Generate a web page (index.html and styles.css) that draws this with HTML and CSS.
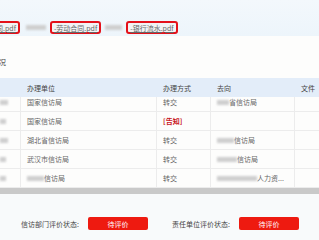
FILE: index.html
```html
<!DOCTYPE html>
<html lang="zh">
<head>
<meta charset="utf-8">
<link rel="stylesheet" href="styles.css">
</head>
<body>
<div class="top">
  <a class="file first">劳动合同.pdf</a>
  <span class="blur w20"></span>
  <a class="file">-劳动合同.pdf</a>
  <span class="blur w17"></span>
  <a class="file">-银行流水.pdf</a>
</div>
<div class="title">处理情况</div>
<div class="table">
  <div class="thead row">
    <div class="c1"></div>
    <div class="c2">办理单位</div>
    <div class="c3">办理方式</div>
    <div class="c4">去向</div>
    <div class="c5">文件</div>
  </div>
  <div class="tbody">
    <div class="row firstrow">
      <div class="c1"><span class="blur w8"></span></div>
      <div class="c2">国家信访局</div>
      <div class="c3">转交</div>
      <div class="c4"><span class="blur w12"></span>省信访局</div>
      <div class="c5"></div>
    </div>
    <div class="row">
      <div class="c1"><span class="blur w6"></span></div>
      <div class="c2">国家信访局</div>
      <div class="c3 notice">[告知]</div>
      <div class="c4"></div>
      <div class="c5"></div>
    </div>
    <div class="row">
      <div class="c1"><span class="blur w8"></span></div>
      <div class="c2">湖北省信访局</div>
      <div class="c3">转交</div>
      <div class="c4"><span class="blur w17"></span>信访局</div>
      <div class="c5"></div>
    </div>
    <div class="row">
      <div class="c1"><span class="blur w6"></span></div>
      <div class="c2">武汉市信访局</div>
      <div class="c3">转交</div>
      <div class="c4"><span class="blur w20"></span>信访局</div>
      <div class="c5"></div>
    </div>
    <div class="row">
      <div class="c1"><span class="blur w6"></span></div>
      <div class="c2"><span class="blur w17"></span>信访局</div>
      <div class="c3">转交</div>
      <div class="c4"><span class="blur w40"></span>人力资...</div>
      <div class="c5"></div>
    </div>
  </div>
</div>
<div class="scrollbar"></div>
<div class="footer">
  <div class="group">
    <span class="label">信访部门评价状态:</span>
    <span class="btn">待评价</span>
  </div>
  <div class="group second">
    <span class="label">责任单位评价状态:</span>
    <span class="btn">待评价</span>
  </div>
</div>
</body>
</html>
```

FILE: styles.css
```css
html, body {
  margin: 0;
  padding: 0;
}
body {
  width: 319px;
  height: 240px;
  overflow: hidden;
  background: #fdfdfc;
  font-family: "Noto Sans CJK SC", "Noto Sans", sans-serif;
  font-size: 7px;
  color: #555;
}
.top {
  height: 36px;
  box-sizing: border-box;
  padding-top: 21px;
  background: linear-gradient(#f3f8fc, #edf5fb);
  display: flex;
  align-items: flex-start;
  gap: 4px;
  margin-left: -29px;
}
.file {
  display: inline-flex;
  align-items: center;
  height: 13px;
  box-sizing: border-box;
  border: 2px solid #e4111a;
  border-radius: 3px;
  padding: 0 2px;
  background: #f2f3f4;
  color: #666;
  text-decoration: underline;
  font-size: 7px;
  white-space: nowrap;
}
.first {
  margin-right: 2px;
}
.top .blur {
  margin-top: 4px;
}
.blur {
  display: inline-block;
  height: 5px;
  background: #cfcfcf;
  filter: blur(1px);
  vertical-align: middle;
}
.w6 { width: 6px; }
.w8 { width: 8px; }
.w12 { width: 12px; }
.w17 { width: 17px; }
.w20 { width: 20px; }
.w40 { width: 40px; }
.title {
  margin-top: 22px;
  margin-left: -22px;
  font-size: 7px;
  line-height: 9px;
  color: #444;
  height: 20px;
}
.row {
  display: grid;
  grid-template-columns: 21px 136px 54px 84px 24px;
  height: 19px;
  border-bottom: 1px solid #ececec;
  box-sizing: border-box;
}
.row > div {
  display: flex;
  align-items: center;
  border-right: 1px solid #ececec;
  padding-left: 6px;
  white-space: nowrap;
  overflow: hidden;
}
.row > .c1 {
  padding-left: 0;
}
.row > .c5 {
  border-right: none;
}
.thead {
  background: #e3edf9;
  color: #444;
  border-bottom: none;
}
.thead > div {
  border-right: none;
}
.tbody {
  height: 91px;
  overflow: hidden;
  color: #666;
}
.firstrow {
  margin-top: -4px;
}
.notice {
  color: #c8141c;
  font-weight: bold;
}
.scrollbar {
  height: 6px;
  background: #c9c9c9;
}
.footer {
  height: 46px;
  background: #f8fafb;
  display: flex;
  padding-top: 23px;
  padding-left: 21px;
  box-sizing: border-box;
}
.group {
  display: flex;
  align-items: center;
  gap: 9px;
  height: 13px;
}
.second {
  margin-left: 24px;
}
.label {
  color: #444;
}
.btn {
  width: 60px;
  height: 13px;
  background: #ee1a10;
  color: #fff;
  border-radius: 2px;
  display: flex;
  align-items: center;
  justify-content: center;
}
```
